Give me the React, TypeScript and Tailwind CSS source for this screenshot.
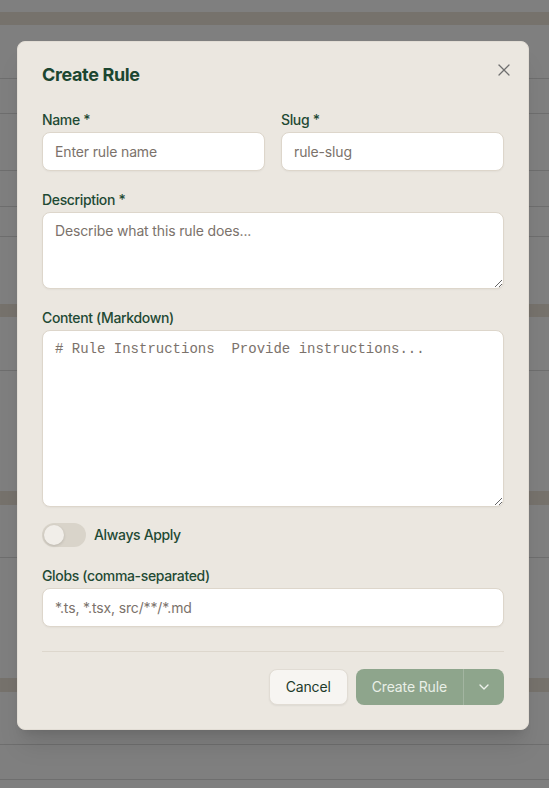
import React from "react";
import { X, ChevronDown } from "lucide-react";

function Field({
  label,
  children,
}: {
  label: string;
  children: React.ReactNode;
}) {
  return (
    <div className="flex flex-col gap-[2px]">
      <label className="text-sm leading-5 font-medium tracking-[-0.025em] text-[#1f4a34]">{label}</label>
      {children}
    </div>
  );
}

const inputCls =
  "h-[39px] w-full rounded-lg border border-[#ddd6cb] bg-white px-3 text-sm tracking-[-0.01em] text-[#2b2b2b] shadow-[0_1px_2px_rgba(0,0,0,0.04)] outline-none placeholder:text-[#7b726b]";

export default function App() {
  return (
    <div className="relative h-[788px] w-full overflow-hidden bg-white font-['Inter',sans-serif]">
      {/* underlying page */}
      <div className="flex flex-col">
        <div className="h-[12px]" />
        <div className="h-[13px] bg-[#ece4d8]" />
        <div className="h-[54px] border-b border-[#dcdcdc]" />
        <div className="h-[35px] border-b border-[#dcdcdc]" />
        <div className="h-[57px] border-b border-[#dcdcdc]" />
        <div className="h-[36px] border-b border-[#dcdcdc]" />
        <div className="h-[30px] border-b border-[#dcdcdc]" />
        <div className="h-[67px]" />
        <div className="h-[13px] bg-[#ece4d8]" />
        <div className="h-[54px] border-b border-[#dcdcdc]" />
        <div className="h-[120px]" />
        <div className="h-[14px] bg-[#ece4d8]" />
        <div className="h-[53px] border-b border-[#dcdcdc]" />
        <div className="h-[120px]" />
        <div className="h-[14px] bg-[#ece4d8]" />
        <div className="h-[53px] border-b border-[#dcdcdc]" />
        <div className="h-[35px] border-b border-[#dcdcdc]" />
      </div>

      {/* overlay */}
      <div className="absolute inset-0 bg-black/50" />

      {/* modal */}
      <div className="absolute left-[17px] top-[41px] w-[512px] rounded-lg border border-[#e2ddd5] bg-[#ebe7e0] p-6 shadow-xl">
        <button className="absolute right-[14px] top-[18px] text-[#6f6f6f]">
          <X size={20} strokeWidth={1.5} />
        </button>

        <h2 className="text-lg leading-none font-bold tracking-[-0.02em] text-[#1c4630]">Create Rule</h2>

        <div className="mt-[26px] flex flex-col gap-[19px]">
          <div className="grid grid-cols-2 gap-4">
            <Field label="Name *">
              <input className={inputCls} placeholder="Enter rule name" />
            </Field>
            <Field label="Slug *">
              <input className={inputCls} placeholder="rule-slug" />
            </Field>
          </div>

          <Field label="Description *">
            <textarea
              className="block h-[77px] w-full rounded-lg border border-[#ddd6cb] bg-white px-3 py-2 text-sm leading-5 tracking-[-0.01em] text-[#2b2b2b] shadow-[0_1px_2px_rgba(0,0,0,0.04)] outline-none placeholder:text-[#7b726b]"
              placeholder="Describe what this rule does..."
            />
          </Field>

          <Field label="Content (Markdown)">
            <textarea
              className="block h-[177px] w-full rounded-lg border border-[#ddd6cb] bg-white px-3 py-2 font-['Liberation_Mono',monospace] text-sm leading-5 text-[#2b2b2b] shadow-[0_1px_2px_rgba(0,0,0,0.04)] outline-none placeholder:text-[#7b726b]"
              placeholder="# Rule Instructions  Provide instructions..."
            />
          </Field>
        </div>

        <div className="mt-4 flex items-center gap-2">
          <button className="relative h-6 w-11 rounded-full bg-[#d9d4ca]">
            <span className="absolute left-[2px] top-[2px] h-5 w-5 rounded-full bg-[#f1eee9] shadow-[0_1px_3px_rgba(0,0,0,0.15)]" />
          </button>
          <span className="text-sm leading-5 font-medium tracking-[-0.025em] text-[#1f4a34]">Always Apply</span>
        </div>

        <div className="mt-[19px]">
          <Field label="Globs (comma-separated)">
            <input className={inputCls} placeholder="*.ts, *.tsx, src/**/*.md" />
          </Field>
        </div>

        <div className="mt-6 flex justify-end gap-2 border-t border-[#ddd7cd] pt-[17px]">
          <button className="h-9 rounded-lg border border-[#e1dcd4] bg-[#f7f5f2] px-4 text-sm font-normal tracking-[-0.01em] text-[#1d3a2b] shadow-[0_1px_2px_rgba(0,0,0,0.06)]">
            Cancel
          </button>
          <div className="flex h-9 overflow-hidden rounded-lg bg-[#8ea58c]">
            <button className="px-4 text-sm font-normal tracking-[-0.01em] text-[#e9efe7]">Create Rule</button>
            <button className="flex w-[41px] items-center justify-center border-l border-[#a3b5a1] text-[#eef2ec]">
              <ChevronDown size={16} strokeWidth={2} />
            </button>
          </div>
        </div>
      </div>
    </div>
  );
}
